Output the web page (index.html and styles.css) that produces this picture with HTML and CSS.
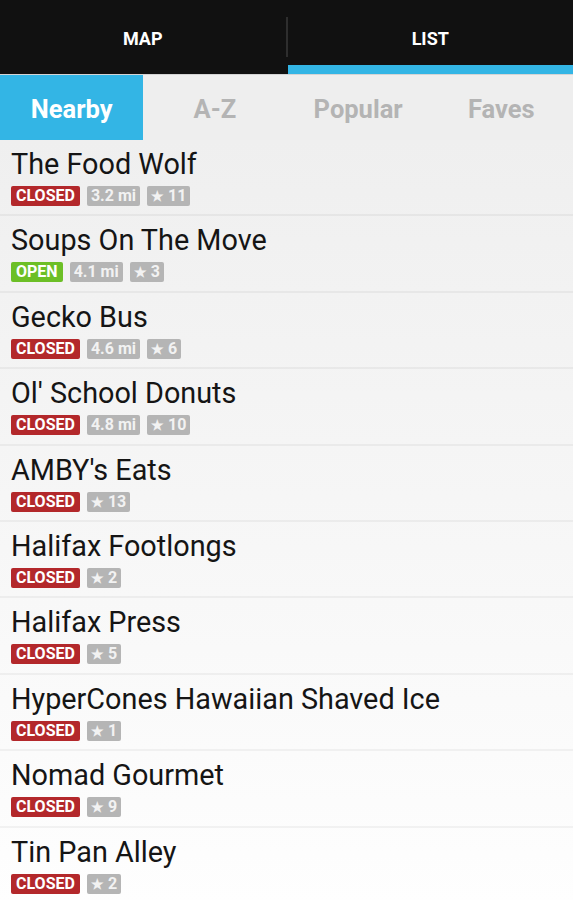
FILE: index.html
```html
<!DOCTYPE html>
<html lang="en">
<head>
  <meta charset="UTF-8" />
  <meta name="viewport" content="width=device-width, initial-scale=1.0"/>
  <title>Food Trucks</title>
  <link rel="stylesheet" href="styles.css">
</head>
<body>
  <header class="tabs">
    <div class="tab">MAP</div>
    <div class="tab-divider"></div>
    <div class="tab active">LIST</div>
  </header>

  <nav class="sort">
    <div class="sort-item active">Nearby</div>
    <div class="sort-item">A-Z</div>
    <div class="sort-item">Popular</div>
    <div class="sort-item">Faves</div>
  </nav>

  <ul class="list">
    <li class="row">
      <h2>The Food Wolf</h2>
      <div class="badges">
        <span class="badge closed">CLOSED</span>
        <span class="badge">3.2 mi</span>
        <span class="badge"><i class="star">★</i> 11</span>
      </div>
    </li>
    <li class="row">
      <h2>Soups On The Move</h2>
      <div class="badges">
        <span class="badge open">OPEN</span>
        <span class="badge">4.1 mi</span>
        <span class="badge"><i class="star">★</i> 3</span>
      </div>
    </li>
    <li class="row">
      <h2>Gecko Bus</h2>
      <div class="badges">
        <span class="badge closed">CLOSED</span>
        <span class="badge">4.6 mi</span>
        <span class="badge"><i class="star">★</i> 6</span>
      </div>
    </li>
    <li class="row">
      <h2>Ol' School Donuts</h2>
      <div class="badges">
        <span class="badge closed">CLOSED</span>
        <span class="badge">4.8 mi</span>
        <span class="badge"><i class="star">★</i> 10</span>
      </div>
    </li>
    <li class="row">
      <h2>AMBY's Eats</h2>
      <div class="badges">
        <span class="badge closed">CLOSED</span>
        <span class="badge"><i class="star">★</i> 13</span>
      </div>
    </li>
    <li class="row">
      <h2>Halifax Footlongs</h2>
      <div class="badges">
        <span class="badge closed">CLOSED</span>
        <span class="badge"><i class="star">★</i> 2</span>
      </div>
    </li>
    <li class="row">
      <h2>Halifax Press</h2>
      <div class="badges">
        <span class="badge closed">CLOSED</span>
        <span class="badge"><i class="star">★</i> 5</span>
      </div>
    </li>
    <li class="row">
      <h2>HyperCones Hawaiian Shaved Ice</h2>
      <div class="badges">
        <span class="badge closed">CLOSED</span>
        <span class="badge"><i class="star">★</i> 1</span>
      </div>
    </li>
    <li class="row">
      <h2>Nomad Gourmet</h2>
      <div class="badges">
        <span class="badge closed">CLOSED</span>
        <span class="badge"><i class="star">★</i> 9</span>
      </div>
    </li>
    <li class="row">
      <h2>Tin Pan Alley</h2>
      <div class="badges">
        <span class="badge closed">CLOSED</span>
        <span class="badge"><i class="star">★</i> 2</span>
      </div>
    </li>
  </ul>
</body>
</html>
```

FILE: styles.css
```css
* {
  box-sizing: border-box;
}

body {
  margin: 0;
  font-family: Roboto, "Liberation Sans", sans-serif;
  background: #fefefe;
  color: #151515;
  overflow: hidden;
}

/* top tab bar */
.tabs {
  display: flex;
  height: 74px;
  background: #111;
}

.tab {
  flex: 1;
  display: flex;
  align-items: center;
  justify-content: center;
  color: #fff;
  font-weight: bold;
  font-size: 18px;
  padding-top: 2px;
}

.tab.active {
  border-bottom: 9px solid #33b5e5;
  padding-top: 11px;
}

.tab-divider {
  width: 2px;
  margin: 17px 0;
  background: #2e2e2e;
}

/* sort bar */
.sort {
  display: grid;
  grid-template-columns: repeat(4, 1fr);
  height: 66px;
  background: #eeeeee;
  border-top: 1px solid #d4d4d4;
}

.sort-item {
  display: flex;
  align-items: center;
  justify-content: center;
  font-size: 25.5px;
  font-weight: bold;
  color: #b4b4b4;
  padding-top: 2px;
}

.sort-item.active {
  background: #33b5e5;
  color: #fff;
}

/* list */
.list {
  list-style: none;
  margin: 0;
  padding: 0;
  background: linear-gradient(#efefef, #fefefe);
}

.row {
  height: 76.4px;
  padding: 7px 11px 0;
  border-bottom: 2px solid rgba(0, 0, 0, 0.045);
}

.row h2 {
  margin: 0;
  font-size: 28.8px;
  font-weight: normal;
  line-height: 35px;
  white-space: nowrap;
}

.badges {
  display: flex;
  gap: 7px;
  margin-top: 4px;
}

.badge {
  height: 20px;
  line-height: 20px;
  padding: 0 4px;
  font-size: 16px;
  font-weight: bold;
  color: #f2f2f2;
  background: #b5b5b5;
  border-radius: 2px;
}

.star {
  font-style: normal;
  font-size: 14px;
}

.badge.closed {
  background: #b3282b;
  color: #fff;
  padding: 0 5px;
}

.badge.open {
  background: #6cbf26;
  color: #fff;
  padding: 0 5px;
}
```
